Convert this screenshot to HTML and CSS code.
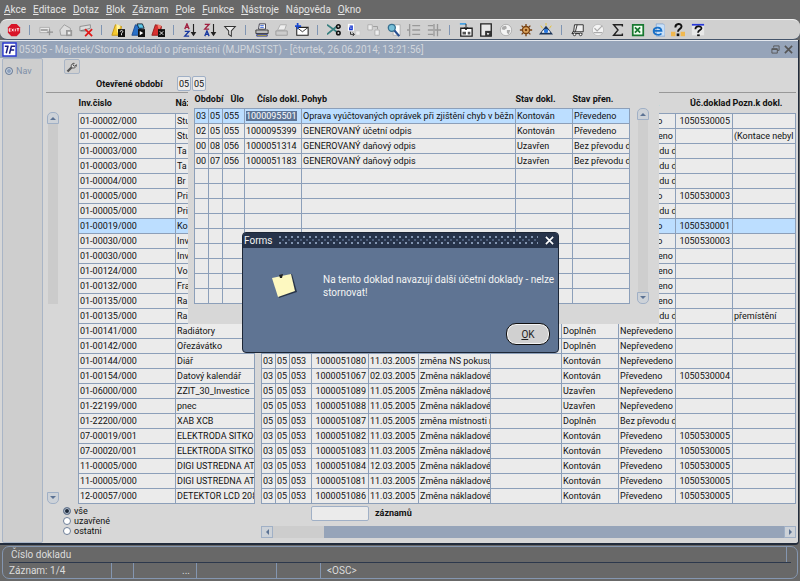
FILE: index.html
```html
<!DOCTYPE html>
<html lang="cs">
<head>
    <meta charset="UTF-8">
    <meta name="viewport" content="width=device-width, initial-scale=1.0">
    <link rel="stylesheet" href="styles.css">
    <title>05305 - Majetek/Storno dokladů</title>
</head>
<body>
    <nav class="menubar">
        <a href="#"><u>A</u>kce</a>
        <a href="#"><u>E</u>ditace</a>
        <a href="#"><u>D</u>otaz</a>
        <a href="#"><u>B</u>lok</a>
        <a href="#"><u>Z</u>áznam</a>
        <a href="#"><u>P</u>ole</a>
        <a href="#"><u>F</u>unkce</a>
        <a href="#"><u>N</u>ástroje</a>
        <a href="#">Náp<u>o</u>věda</a>
        <a href="#"><u>O</u>kno</a>
    </nav>

    <div class="toolbar">
        <button aria-label="Konec"><svg viewBox="0 0 16 16"><path d="M5 1h6l4 4v6l-4 4H5l-4-4V5z" fill="#d81428"/><path d="M4 6.500H2.500v3H4M2.500 8H4M5.500 6.500l2 3M7.500 6.500l-2 3M9.500 6.500v3M11 6.500h3M12.500 6.500v3" stroke="#fff" fill="none"/></svg></button>
        <span class="sep"></span>
        <button aria-label="Vložit"><svg viewBox="0 0 16 16"><path d="M1 5h11v6H1z" fill="#e8e8e8" stroke="#aaa"/><path d="M2 8h8M12 7v7M9 10.500h7" stroke="#909090" stroke-width="1.500"/></svg></button>
        <button aria-label="Kopírovat záznam"><svg viewBox="0 0 16 16"><path d="M1 8l5-6 7 4v8H2z" fill="#ddd" stroke="#999"/><path d="M8 8h7v7H8z" fill="#999"/><path d="M10 10h3v3h-3z" fill="#eee"/></svg></button>
        <button aria-label="Smazat"><svg viewBox="0 0 16 16"><path d="M1 4l12-2v4L1 9z" fill="#ddd" stroke="#888"/><path d="M2 9h6" stroke="#666"/><path d="M7 7l8 8M15 7l-8 8" stroke="#e01818" stroke-width="2"/></svg></button>
        <span class="sep"></span>
        <button aria-label="Zadat dotaz"><svg viewBox="0 0 16 16"><path d="M1 14L5 2l7 2-2 10z" fill="#f4c830" stroke="#c09010"/><path d="M6 1l5 2-4 9" fill="#fff3a0"/><path d="M8 7h8v9H8z" fill="#111"/><path d="M10.500 10c0-2 3-2 3 0 0 1-1.500 1-1.500 2v2" stroke="#fff" fill="none"/></svg></button>
        <button aria-label="Provést dotaz"><svg viewBox="0 0 16 16"><path d="M1 14L5 2l7 2-2 10z" fill="#2870c8" stroke="#184890"/><path d="M7 1h6l2 5H9z" fill="#60c8e8" stroke="#123"/><path d="M8 7h8v9H8z" fill="#111"/><path d="M10 9l4 2.500-4 2.500z" fill="#fff"/></svg></button>
        <button aria-label="Zrušit dotaz"><svg viewBox="0 0 16 16"><path d="M1 14L5 2l7 2-2 10z" fill="#d83030" stroke="#901818"/><path d="M7 1l5 2-3 5z" fill="#f08070"/><path d="M8 7h8v9H8z" fill="#111"/><path d="M10 9.500l4 4M14 9.500l-4 4" stroke="#fff"/></svg></button>
        <span class="sep"></span>
        <button aria-label="Třídit vzestupně"><svg viewBox="0 0 16 16"><path d="M2 7l2.500-6L7 7M3 5h3" stroke="#a02040" fill="none" stroke-width="1.500"/><path d="M2 9.500h5L2 15h5" stroke="#1838a0" fill="none" stroke-width="1.500"/><path d="M12 1v12M10 11l2 3 2-3z" stroke="#222" fill="#222" stroke-width="1.300"/></svg></button>
        <button aria-label="Třídit sestupně"><svg viewBox="0 0 16 16"><path d="M2 1.500h5L2 7h5" stroke="#a02040" fill="none" stroke-width="1.500"/><path d="M2 15l2.500-6L7 15M3 13h3" stroke="#1838a0" fill="none" stroke-width="1.500"/><path d="M12 1v12M10 11l2 3 2-3z" stroke="#222" fill="#222" stroke-width="1.300"/></svg></button>
        <button aria-label="Filtr"><svg viewBox="0 0 16 16"><path d="M2 4h12L9.500 9v6L6.500 13V9z" fill="#eee" stroke="#333" stroke-width="1.200"/></svg></button>
        <span class="sep"></span>
        <button aria-label="Tisk"><svg viewBox="0 0 16 16"><path d="M5 1h7v6H4z" fill="#fff" stroke="#334"/><path d="M6 3h4M6 5h4" stroke="#2858d0"/><path d="M1 8h14v4H1z" fill="#bbb" stroke="#333"/><path d="M2 13h12v2H2z" fill="#d8c020" stroke="#2838a0"/></svg></button>
        <button aria-label="Náhled"><svg viewBox="0 0 16 16"><path d="M6 2h7l-2 6H3z" fill="#eee" stroke="#aaa"/><path d="M1 9h13v5H1z" fill="#ccc" stroke="#999"/></svg></button>
        <button aria-label="Pošta"><svg viewBox="0 0 16 16"><path d="M2 5h13v9H2z" fill="#fff" stroke="#222" stroke-width="1.200"/><path d="M2 5l6.500 5L15 5" fill="none" stroke="#222"/><path d="M3 0v7M0 3.500h7" stroke="#1848d0" stroke-width="2"/></svg></button>
        <span class="sep"></span>
        <button aria-label="Vyjmout"><svg viewBox="0 0 16 16"><path d="M0 2l11 8M0 13l11-9" stroke="#388080" stroke-width="2"/><circle cx="13" cy="4" r="2" fill="none" stroke="#111" stroke-width="1.800"/><circle cx="13" cy="11.500" r="2" fill="none" stroke="#111" stroke-width="1.800"/></svg></button>
        <button aria-label="Kopírovat"><svg viewBox="0 0 16 16"><path d="M1 1h7v8H1z" fill="#fff"/><path d="M3 3.500h3v4H3v-2h3" fill="none" stroke="#1838d0" stroke-width="1.300"/><path d="M4 10v3h4M6.500 11l2 2-2 2" fill="none" stroke="#222"/><path d="M10 9h5v5h-5z" fill="#eee" stroke="#ccc"/></svg></button>
        <button aria-label="Vložit ze schránky"><svg viewBox="0 0 16 16"><path d="M1 2h5v6H1zM9 8h5v6H9z" fill="#eee" stroke="#aaa"/><path d="M7 4h5v3" fill="none" stroke="#999"/></svg></button>
        <button aria-label="Hledat"><svg viewBox="0 0 16 16"><path d="M7 2h8v12H7z" fill="#fff" stroke="#aaa"/><circle cx="5.500" cy="5.500" r="4" fill="#78c0d8" stroke="#367090" stroke-width="1.500"/><path d="M8.500 8.500L14 15" stroke="#285090" stroke-width="2.500"/></svg></button>
        <button aria-label="Rozbalit"><svg viewBox="0 0 16 16"><path d="M3 1v14M6 3h9M6 8h9M6 13h9M0 8h3" stroke="#999" stroke-width="1.500"/></svg></button>
        <button aria-label="Sbalit"><svg viewBox="0 0 16 16"><path d="M1 3h6M1 8h6M1 13h6M8 1v14M12 1v14M9 8h7" stroke="#999" stroke-width="1.500"/></svg></button>
        <span class="sep"></span>
        <button aria-label="Přílohy"><svg viewBox="0 0 16 16"><path d="M2 6h13v9H2z" fill="#fff" stroke="#222" stroke-width="1.500"/><path d="M1 1h7" stroke="#48a0e0" stroke-width="2"/><path d="M8 1v6M6 5l2 3 2-3" stroke="#111" fill="none"/><path d="M4 10h4v3H4zM10 10h3v3h-3z" fill="#555"/></svg></button>
        <button aria-label="Poznámka"><svg viewBox="0 0 16 16"><path d="M2 1h12v14H2z" fill="#e8e8e8" stroke="#222" stroke-width="1.500"/><path d="M7 9h7v6H7z" fill="#333"/><path d="M9 11l3 1-2 2z" fill="#fff"/></svg></button>
        <button aria-label="Web"><svg viewBox="0 0 16 16"><circle cx="8" cy="8" r="6.500" fill="#f4f4f4" stroke="#aaa"/><path d="M4 4l4-1 1 3-3 2-3-1zM9 8l4 0-2 5-2-2z" fill="#aaa"/></svg></button>
        <button aria-label="Navigátor"><svg viewBox="0 0 16 16"><path d="M8 1v14M1 8h14M3 3l10 10M13 3L3 13" stroke="#784010" stroke-width="1.500"/><circle cx="8" cy="8" r="4" fill="#e0a860" stroke="#784010" stroke-width="1.500"/><circle cx="8" cy="8" r="1.500" fill="#784010"/></svg></button>
        <button aria-label="Zobrazit"><svg viewBox="0 0 16 16"><path d="M8 3l8 10H0z" fill="#1c3458"/><path d="M3 11c3-5 7-5 10 0z" fill="#fff"/><circle cx="8" cy="9" r="2.500" fill="#2878e0"/><path d="M8 0v3M2 3l2 3M14 3l-2 3" stroke="#e8c020"/></svg></button>
        <span class="sep"></span>
        <button aria-label="Vozík"><svg viewBox="0 0 16 16"><path d="M4 2h10v8H3z" fill="#eee" stroke="#222"/><path d="M7 2L5 10M3 9L1 12h12" fill="none" stroke="#222"/><circle cx="4" cy="13" r="1.500" stroke="#222" fill="#fff"/><circle cx="11" cy="13" r="1.500" stroke="#222" fill="#fff"/></svg></button>
        <button aria-label="Kontrola"><svg viewBox="0 0 16 16"><circle cx="8" cy="8" r="6.500" fill="#f4f4f4" stroke="#bbb"/><path d="M4 6l3 3 6-6M3 11h10" fill="none" stroke="#aaa" stroke-width="1.300"/></svg></button>
        <button aria-label="Součet"><svg viewBox="0 0 16 16"><path d="M13 4V2H3l5 6-5 6h10v-2" fill="none" stroke="#222" stroke-width="1.600"/></svg></button>
        <button aria-label="Excel"><svg viewBox="0 0 16 16"><path d="M2 2h12v12H2z" fill="#f0fff0" stroke="#187830" stroke-width="2"/><path d="M4.500 5l6 6M10.500 5l-6 6" stroke="#187830" stroke-width="2"/></svg></button>
        <button aria-label="Prohlížeč"><svg viewBox="0 0 16 16"><path d="M6 1h8l2 2v12H6z" fill="#c8e0f8" stroke="#88a8d0"/><path d="M12 12c-3 3-9 1-9-3s8-6 9 0H3" fill="none" stroke="#1870c8" stroke-width="2"/></svg></button>
        <button aria-label="Nápověda k poli"><svg viewBox="0 0 16 16"><path d="M0 10h5v5H0zM11 10h5v5h-5z" fill="#f0b850"/><path d="M5 5c0-5 7-5 7-1 0 3-4 2.500-4 6" fill="none" stroke="#111" stroke-width="2.200"/><path d="M6.500 12h3v3h-3z" fill="#111"/></svg></button>
        <button aria-label="Nápověda"><svg viewBox="0 0 16 16"><path d="M1 1h14v13H1z" fill="#e8e8e8"/><path d="M1 2h14" stroke="#2838d8" stroke-width="2"/><path d="M5 7c0-4 7-4 7-1 0 2-4 2-4 5" fill="none" stroke="#111" stroke-width="2"/><path d="M7 13h3v2H7z" fill="#111"/></svg></button>
    </div>

    <div class="window">
        <header class="titlebar">
            <svg class="logo" viewBox="0 0 16 16"><path d="M1 1h14v14H1z" fill="#fff" stroke="#2838d0" stroke-width="1.500"/><path d="M3 4.500h4M6.500 4L4.500 12M8 12.500l2-8h4M9 8.500h4" fill="none" stroke="#181c80" stroke-width="1.600"/></svg>
            <h1>05305 - Majetek/Storno dokladů o přemístění (MJPMSTST) - [čtvrtek, 26.06.2014; 13:21:56]</h1>
            <button aria-label="Obnovit"><svg viewBox="0 0 10 10"><path d="M3 3V1h6v5H7M1 4h6v5H1zM1 5h6" fill="none" stroke="#555"/></svg></button>
            <button aria-label="Zavřít okno"><svg viewBox="0 0 10 10"><path d="M1 1l8 8M9 1L1 9" stroke="#555" stroke-width="1.800"/></svg></button>
        </header>

        <div class="content">
            <aside class="side">
                <label><input type="radio" name="nav" disabled> Nav</label>
            </aside>

            <main class="form">
                <button class="wrench" aria-label="Nastavení"><svg viewBox="0 0 16 16"><path d="M2 14l6-6" stroke="#555" stroke-width="3"/><path d="M14 5c0 4-4 5-6 4-2-2-1-6 3-6L9 5l2 2z" fill="#ddd" stroke="#444" stroke-width="1.200"/></svg></button>
                <div class="period">
                    <label for="obdobi">Otevřené období</label>
                    <input id="obdobi" value="05">
                    <input aria-label="Rok" value="05">
                </div>

                <div class="list">
                    <div class="scroll">
                        <button class="up" aria-label="Nahoru"></button>
                        <div class="track"><div class="thumb"></div></div>
                        <button class="down" aria-label="Dolů"></button>
                    </div>
                    <table class="grid" id="majetek">
                        <colgroup>
                            <col class="c-inv"><col class="c-name"><col class="c-gap"><col class="c-m"><col class="c-m"><col class="c-ulo">
                            <col class="c-num"><col class="c-date"><col class="c-text"><col class="c-free"><col class="c-num"><col class="c-num"><col class="c-num"><col>
                        </colgroup>
                        <thead>
                            <tr><th>Inv.čislo</th><th>Název</th><th colspan="9"></th><th>Stav přen.</th><th class="right">Úč.doklad</th><th>Pozn.k dokl.</th></tr>
                        </thead>
                        <tbody></tbody>
                    </table>
                </div>

                <div class="bottom">
                    <div class="radios">
                        <label><input type="radio" name="stav" checked> vše</label>
                        <label><input type="radio" name="stav"> uzavřené</label>
                        <label><input type="radio" name="stav"> ostatni</label>
                    </div>
                    <div class="right-part">
                        <div class="count">
                            <input id="pocet">
                            <label for="pocet">záznamů</label>
                        </div>
                        <div class="hscroll">
                            <button class="left" aria-label="Vlevo"></button>
                            <div class="hthumb"></div>
                            <button class="rightb" aria-label="Vpravo"></button>
                        </div>
                    </div>
                </div>

                <section class="popup">
                    <table class="grid" id="doklady">
                        <colgroup><col class="c-m"><col class="c-m"><col class="c-ulo"><col class="c-num"><col><col class="c-num"><col class="c-num"></colgroup>
                        <thead>
                            <tr><th colspan="2">Období</th><th class="ulo">Úlo</th><th class="right">Číslo dokl.</th><th>Pohyb</th><th>Stav dokl.</th><th>Stav přen.</th></tr>
                        </thead>
                        <tbody></tbody>
                    </table>
                    <div class="scroll">
                        <button class="up" aria-label="Nahoru"></button>
                        <div class="track"></div>
                        <button class="down" aria-label="Dolů"></button>
                    </div>
                </section>
            </main>
        </div>
    </div>

    <footer class="status">
        <div class="hint"><span>Číslo dokladu</span></div>
        <div class="record">
            <span class="s-rec">Záznam: 1/4</span><span class="s-small"></span><span class="s-dots">...</span><span class="s-wide"></span><span class="s-mid"></span><span>&lt;OSC&gt;</span>
        </div>
    </footer>

    <div class="dialog" role="dialog" aria-labelledby="dlg-title">
        <div class="dlg-head">
            <h2 id="dlg-title">Forms</h2>
            <span class="dots"></span>
            <button aria-label="Zavřít"><svg viewBox="0 0 10 10"><path d="M1 1l8 8M9 1L1 9" stroke="#fff" stroke-width="1.800"/></svg></button>
        </div>
        <div class="dlg-body">
            <svg class="note" viewBox="0 0 26 26"><path d="M3 6l18-5 5 18-18 6z" fill="#283448"/><path d="M1 5l19-4 4 17-17 6z" fill="#fdf8c0"/><path d="M8 2l4-1-1 4-2 0z" fill="#222"/></svg>
            <p>Na tento doklad navazují další účetní doklady - nelze stornovat!</p>
        </div>
        <div class="dlg-foot"><button class="ok"><u>O</u>K</button></div>
    </div>

    <script>
const P = "Převedeno", N = "Nepřevedeno", B = "Bez převodu do";
const zm = "Změna nákladové";
// inv, nazev, obdobi, rok, ulo, cislo, datum, pohyb, stav, prenos, ucdoklad, pozn
const majetek = [
  ["01-00002/000", "Stu", "", "", "", "", "", "", "", P, "1050530005", ""],
  ["01-00002/000", "Stu", "", "", "", "", "", "", "", N, "", "(Kontace nebyl"],
  ["01-00003/000", "Ta", "", "", "", "", "", "", "", B, "", ""],
  ["01-00003/000", "Ta", "", "", "", "", "", "", "", B, "", ""],
  ["01-00004/000", "Br", "", "", "", "", "", "", "", B, "", ""],
  ["01-00005/000", "Pri", "", "", "", "", "", "", "", P, "1050530003", ""],
  ["01-00005/000", "Pri", "", "", "", "", "", "", "", B, "", ""],
  ["01-00019/000", "Ko", "", "", "", "", "", "", "", P, "1050530001", ""],
  ["01-00030/000", "Inv", "", "", "", "", "", "", "", P, "1050530003", ""],
  ["01-00030/000", "Inv", "", "", "", "", "", "", "", N, "", ""],
  ["01-00124/000", "Vo", "", "", "", "", "", "", "", N, "", ""],
  ["01-00132/000", "Fra", "", "", "", "", "", "", "", N, "", ""],
  ["01-00135/000", "Ra", "", "", "", "", "", "", "", N, "", ""],
  ["01-00135/000", "Ra", "", "", "", "", "", "", "", B, "", "přemístění"],
  ["01-00141/000", "Radiátory", "", "", "", "", "", "", "Doplněn", N, "", ""],
  ["01-00142/000", "Ořezávátko", "", "", "", "", "", "", "Doplněn", N, "", ""],
  ["01-00144/000", "Diář", "03", "05", "053", "1000051080", "11.03.2005", "změna NS pokusu", "Kontován", N, "", ""],
  ["01-00154/000", "Datový kalendář", "03", "05", "053", "1000051067", "02.03.2005", zm, "Kontován", P, "1050530004", ""],
  ["01-06000/000", "ZZIT_30_Investice", "05", "05", "053", "1000051089", "11.05.2005", zm, "Uzavřen", N, "", ""],
  ["01-22199/000", "pnec", "05", "05", "053", "1000051088", "11.05.2005", zm, "Uzavřen", N, "", ""],
  ["01-22200/000", "XAB XCB", "05", "05", "053", "1000051087", "11.05.2005", "změna místnosti n", "Doplněn", B, "", ""],
  ["07-00019/001", "ELEKTRODA SITKO", "03", "05", "053", "1000051082", "11.03.2005", zm, "Kontován", P, "1050530005", ""],
  ["07-00020/001", "ELEKTRODA SITKO", "03", "05", "053", "1000051083", "11.03.2005", zm, "Kontován", P, "1050530005", ""],
  ["11-00005/000", "DIGI USTREDNA AT", "03", "05", "053", "1000051084", "12.03.2005", zm, "Kontován", P, "1050530005", ""],
  ["11-00005/000", "DIGI USTREDNA AT", "03", "05", "053", "1000051081", "11.03.2005", zm, "Kontován", P, "1050530005", ""],
  ["12-00057/000", "DETEKTOR LCD 208", "03", "05", "053", "1000051086", "11.03.2005", zm, "Kontován", P, "1050530005", ""]
];
const doklady = [
  ["03", "05", "055", "<mark>1000095501</mark>", "Oprava vyúčtovaných oprávek při zjištění chyb v běžn", "Kontován", P],
  ["02", "05", "055", "1000095399", "GENEROVANÝ účetní odpis", "Kontován", P],
  ["00", "08", "056", "1000051314", "GENEROVANÝ daňový odpis", "Uzavřen", B],
  ["00", "07", "056", "1000051183", "GENEROVANÝ daňový odpis", "Uzavřen", B]
];
while (doklady.length < 13) doklady.push(["", "", "", "", "", "", ""]);

function fill(id, rows, selected) {
  const body = document.querySelector("#" + id + " tbody");
  rows.forEach((row, i) => {
    const tr = body.insertRow();
    if (i === selected) tr.className = "selected";
    row.forEach(value => { tr.insertCell().innerHTML = value; });
  });
}

// empty column between the asset and its documents
majetek.forEach(row => row.splice(2, 0, ""));
// the free text column next to "pohyb"
majetek.forEach(row => row.splice(9, 0, ""));
fill("majetek", majetek, 7);
fill("doklady", doklady, 0);
    </script>
</body>
</html>
```
FILE: styles.css
```css
* {
  box-sizing: border-box;
}
body {
  margin: 0;
  min-height: 100vh;
  display: flex;
  flex-direction: column;
  position: relative;
  background: #686868;
  color: #111;
  font-family: Roboto, "Liberation Sans", Arial, sans-serif;
  font-size: 9px;
  overflow-x: hidden;
}
button, input {
  font: inherit;
  color: inherit;
  margin: 0;
  padding: 0;
}
h1, h2, p {
  margin: 0;
  font-weight: normal;
}

/* menu and toolbar */
.menubar {
  display: flex;
  gap: 7px;
  height: 19px;
  padding: 0 4px;
  line-height: 20px;
  font-size: 10px;
}
.menubar a {
  color: #e4e4e4;
  text-decoration: none;
}
.toolbar {
  display: flex;
  align-items: center;
  height: 21px;
  padding: 0 4px;
  background: #d0d0d0;
  border-top: 1px solid #f0f0f0;
  border-bottom: 1px solid #44546a;
  border-radius: 7px;
}
.toolbar button {
  width: 20px;
  height: 18px;
  padding: 2px 3px;
  border: 0;
  background: none;
}
.toolbar svg {
  display: block;
  width: 14px;
  height: 14px;
}
.sep {
  width: 12px;
  height: 10px;
  background: linear-gradient(#7f95b3, #7f95b3) 5px 0 / 1px 10px no-repeat;
}

/* window */
.window {
  flex: 1;
  display: flex;
  flex-direction: column;
  margin-right: 1px;
  background: #d7d7d7;
  border-right: 1px solid #222c3c;
  border-bottom: 2px solid #222c3c;
  border-bottom-right-radius: 4px;
}
.titlebar {
  display: flex;
  align-items: center;
  height: 18px;
  padding: 0 3px 0 2px;
  background: #96a4b9;
  border-top: 1px solid #e4e8ee;
}
.logo {
  width: 15px;
  height: 15px;
}
.titlebar h1 {
  flex: 1;
  margin-left: 2px;
  color: #d2d6dc;
  font-size: 10px;
}
.titlebar button {
  width: 13px;
  height: 10px;
  border: 0;
  background: none;
}
.titlebar button svg {
  display: block;
  width: 9px;
  height: 9px;
  margin: 0 auto;
}
.content {
  flex: 1;
  display: flex;
}
.side {
  width: 41px;
  margin-left: 2px;
  padding: 7px 2px;
  background: #cecece;
  border: 1px solid #a9b5c6;
  border-radius: 2px;
  color: #8090a8;
}
.side label, .radios label {
  display: flex;
  align-items: center;
  gap: 3px;
}
input[type="radio"] {
  appearance: none;
  width: 8px;
  height: 8px;
  background: #fff;
  border: 1px solid #6e7f98;
  border-radius: 50%;
}
.side input[type="radio"] {
  background: #8ca0bc;
  box-shadow: inset 0 0 0 1px #d0d8e4;
}
.radios input[type="radio"]:checked {
  background: #1c2838;
  box-shadow: inset 0 0 0 1px #b8c4d4;
}

/* form */
.form {
  flex: 1;
  min-width: 0;
  position: relative;
  padding: 1px 2px 0 3px;
}
.wrench {
  display: block;
  width: 16px;
  height: 15px;
  margin-left: 18px;
  border: 1px solid #a9b5c6;
  border-radius: 2px;
  background: #d0d0d0;
}
.wrench svg {
  display: block;
  width: 12px;
  height: 12px;
  margin: 0 auto;
}
.period {
  display: flex;
  align-items: center;
  gap: 1px;
  height: 19px;
  padding: 2px 0 1px 50px;
  border-bottom: 1px solid #989898;
}
.period label {
  width: 80px;
  font-weight: bold;
}
.period input, .count input {
  width: 14px;
  height: 15px;
  text-align: center;
  background: #ebebeb;
  border: 1px solid #a0b0c6;
  border-radius: 2px;
}
.list {
  display: flex;
}
.grid {
  flex: 1;
  width: 100%;
  table-layout: fixed;
  border-collapse: collapse;
}
.grid th {
  height: 17px;
  padding: 0;
  line-height: 16px;
  text-align: left;
  white-space: nowrap;
}
.grid td {
  height: 15px;
  padding: 0 0 0 1px;
  line-height: 14px;
  white-space: nowrap;
  overflow: hidden;
  background: #ebebeb;
  border: 1px solid #8c9fb9;
}
.grid .selected td {
  background: #bcdeff;
}
.grid th.right {
  padding-right: 2px;
  text-align: right;
}
.c-inv { width: 97px; }
.c-name { width: 79px; }
.c-gap { width: 7px; }
.c-m { width: 14px; }
.c-ulo { width: 22px; }
.c-num { width: 57px; }
.c-date { width: 50px; }
.c-text { width: 72px; }
.c-free { width: 71px; }
#majetek th {
  height: 20px;
}
#majetek td:nth-child(3) {
  background: none;
  border-top: 0;
  border-bottom: 0;
}
#majetek td:nth-child(7), #majetek td:nth-child(13) {
  padding-right: 2px;
  text-align: right;
}
mark {
  background: #5c7394;
  color: #fff;
}

/* scrollbars */
.scroll {
  display: flex;
  flex-direction: column;
  width: 12px;
}
.list .scroll {
  margin: 19px 19px 0 1px;
}
.scroll button, .hscroll button {
  width: 12px;
  height: 12px;
  background: #cdd2d8;
  border: 1px solid #a0b0c6;
}
.scroll button::before, .hscroll button::before {
  content: "";
  display: block;
  width: 0;
  margin: 0 auto;
  border: 3px solid transparent;
}
.scroll .up { border-radius: 5px 5px 0 0; }
.scroll .down { border-radius: 0 0 5px 5px; }
.scroll .up::before { border-top: 0; border-bottom-color: #5c7394; }
.scroll .down::before { border-bottom: 0; border-top-color: #5c7394; }
.track {
  flex: 1;
  margin: 0 1px;
}
.popup .track {
  background: #cecece;
}
.thumb {
  height: 49%;
  background: #cbcbcb;
}

/* under the list */
.bottom {
  display: flex;
}
.radios {
  width: 215px;
  padding: 2px 0 0 17px;
}
.radios label {
  height: 10px;
}
.right-part {
  flex: 1;
}
.count {
  display: flex;
  align-items: center;
  gap: 6px;
  padding: 2px 0 0 50px;
  font-weight: bold;
}
.count input {
  width: 58px;
}
.hscroll {
  display: flex;
  height: 12px;
  margin: 5px 0;
  background: #96a4b9;
}
.hscroll .left::before { border-left: 0; border-right-color: #5c7394; }
.hscroll .rightb::before { border-right: 0; border-left-color: #5c7394; }
.hthumb {
  width: 51px;
  margin-right: auto;
  background: #cdcdcd;
}

/* documents list that lies over the form */
.popup {
  position: absolute;
  top: 33px;
  left: 145px;
  width: 471px;
  display: flex;
  padding: 0 10px 20px 6px;
  background: #d7d7d7;
}
.popup .grid {
  margin-right: 7px;
}
.popup .scroll {
  margin-top: 17px;
}
.grid th.ulo {
  padding-left: 8px;
}

/* status bar */
.status {
  height: 33px;
  margin: 1px 2px 4px;
  padding: 0 6px;
  border: 1px solid #8496b0;
  border-radius: 7px;
  color: #dcdcdc;
  font-size: 10px;
  line-height: 15px;
}
.hint {
  padding: 0 4px 0 2px;
  border-bottom: 1px solid #2c384c;
}
.hint span {
  display: block;
  border-right: 1px solid #8496b0;
}
.record {
  display: flex;
}
.record span {
  padding-right: 6px;
}
.record span + span {
  padding-left: 6px;
  border-left: 1px solid #8496b0;
}
.record .s-rec { width: 102px; }
.record .s-small { width: 22px; }
.record .s-dots { width: 63px; text-align: right; }
.record .s-wide { width: 80px; }
.record .s-mid { width: 44px; }

/* message */
.dialog {
  position: absolute;
  top: 232px;
  left: 242px;
  width: 317px;
  background: #5f7493;
  border: 1px solid #1c2636;
  border-radius: 4px;
  color: #f4f4f4;
  font-size: 10px;
  overflow: hidden;
}
.dlg-head {
  display: flex;
  align-items: center;
  gap: 7px;
  height: 15px;
  padding: 0 4px 0 1px;
  background: #26334a;
}
.dlg-head h2 {
  font-size: 10px;
}
.dots {
  flex: 1;
  height: 9px;
  background:
    radial-gradient(circle at 1px 1px, #8194b0 1px, transparent 1px) 0 0 / 6px 6px,
    radial-gradient(circle at 1px 1px, #4c5e7c 1px, transparent 1px) 3px 3px / 6px 6px;
}
.dlg-head button {
  width: 9px;
  height: 9px;
  border: 0;
  background: none;
}
.dlg-head button svg {
  display: block;
}
.dlg-body {
  display: flex;
  height: 75px;
  padding: 25px 0 0 28px;
}
.note {
  width: 26px;
  height: 26px;
}
.dlg-body p {
  flex: 1;
  margin-left: 26px;
  line-height: 13px;
}
.dlg-foot {
  display: flex;
  justify-content: flex-end;
  padding: 0 8px 7px;
}
.ok {
  width: 44px;
  height: 22px;
  color: #222;
  background: #d0d0d0;
  border: 1px solid #111;
  border-radius: 10px;
  box-shadow: inset 0 0 0 1px #f4f4f4;
}
```
